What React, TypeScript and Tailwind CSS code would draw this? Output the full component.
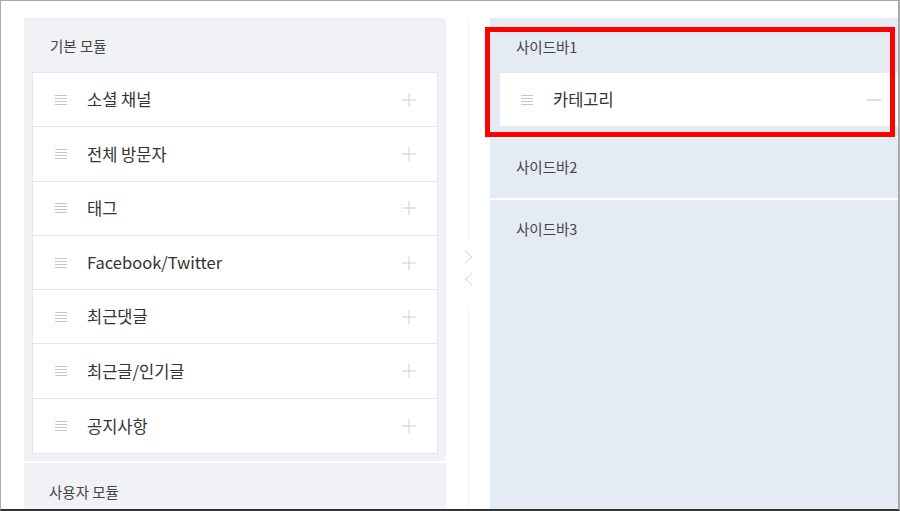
const basicModules = [
  "소셜 채널",
  "전체 방문자",
  "태그",
  "Facebook/Twitter",
  "최근댓글",
  "최근글/인기글",
  "공지사항",
];

const Handle = () => (
  <svg width="12" height="10" viewBox="0 0 12 10" className="shrink-0">
    <path d="M0 0.5h12M0 3.5h12M0 6.5h12M0 9.5h12" stroke="#c6c6c6" strokeWidth="1" />
  </svg>
);

const Plus = () => (
  <svg width="14" height="14" viewBox="0 0 14 14" className="shrink-0">
    <path d="M7 0v14M0 7h14" stroke="#cfcfcf" strokeWidth="1" />
  </svg>
);

const Minus = () => (
  <svg width="14" height="14" viewBox="0 0 14 14" className="shrink-0">
    <path d="M0 7h14" stroke="#bdbdbd" strokeWidth="1" />
  </svg>
);

const Chevron = ({ dir }: { dir: "left" | "right" }) => (
  <svg width="9" height="14" viewBox="0 0 9 14">
    <path
      d={dir === "right" ? "M1 1l7 6-7 6" : "M8 1L1 7l7 6"}
      fill="none"
      stroke="#cfd4da"
      strokeWidth="1"
    />
  </svg>
);

const SectionTitle = ({ children }: { children: React.ReactNode }) => (
  <p className="pt-[20px] px-[26px] text-[14.5px] leading-[18px] text-[#444]">
    {children}
  </p>
);

export default function App() {
  return (
    <div
      className="w-[900px] h-[511px] bg-white overflow-hidden border-t border-l border-r-2 border-b-2 border-[#a9a9a9] border-b-[#333] flex"
      style={{ fontFamily: '"Noto Sans CJK KR", "Noto Sans", sans-serif' }}
    >
      {/* left column */}
      <div className="ml-[23px] mt-[17px] w-[422px] shrink-0 flex flex-col gap-[2px]">
        <div className="bg-[#f0f2f6] px-[8px] pb-[7px]">
          <p className="pt-[19px] px-[18px] text-[14.5px] leading-[18px] text-[#444] mb-[17px]">
            기본 모듈
          </p>
          <ul className="bg-white border border-[#e1e6ee] divide-y divide-[#e1e6ee]">
            {basicModules.map((m) => (
              <li key={m} className="h-[54.3px] flex items-center pl-[22px] pr-[21px]">
                <Handle />
                <span className="ml-[20px] flex-1 text-[16.5px] text-[#333]">{m}</span>
                <Plus />
              </li>
            ))}
          </ul>
        </div>
        <div className="bg-[#f0f2f6] flex-1">
          <p className="pt-[20px] px-[25px] text-[14.5px] leading-[18px] text-[#444]">
            사용자 모듈
          </p>
        </div>
      </div>

      {/* gutter */}
      <div className="w-[44px] shrink-0 flex flex-col items-center pt-[17px]">
        <div className="w-px h-[222px] bg-[#f1f1f1]" />
        <div className="mt-[10px]">
          <Chevron dir="right" />
        </div>
        <div className="mt-[8px]">
          <Chevron dir="left" />
        </div>
        <div className="mt-[20px] w-px flex-1 bg-[#f1f1f1]" />
      </div>

      {/* right column */}
      <div className="relative mt-[17px] flex-1 flex flex-col gap-[2px]">
        <div className="bg-[#e4ebf3] pb-[10px]">
          <SectionTitle>사이드바1</SectionTitle>
          <div className="mt-[17px] ml-[10px] h-[53px] bg-white flex items-center pl-[21px] pr-[17px]">
            <Handle />
            <span className="ml-[20px] flex-1 text-[16.5px] text-[#333]">카테고리</span>
            <Minus />
          </div>
        </div>
        <div className="bg-[#e4ebf3] h-[60px]">
          <SectionTitle>사이드바2</SectionTitle>
        </div>
        <div className="bg-[#e4ebf3] flex-1">
          <SectionTitle>사이드바3</SectionTitle>
        </div>
        <div className="absolute left-[-5px] top-[9px] w-[410px] h-[110px] border-[5px] border-[#ff0000]" />
      </div>
    </div>
  );
}
